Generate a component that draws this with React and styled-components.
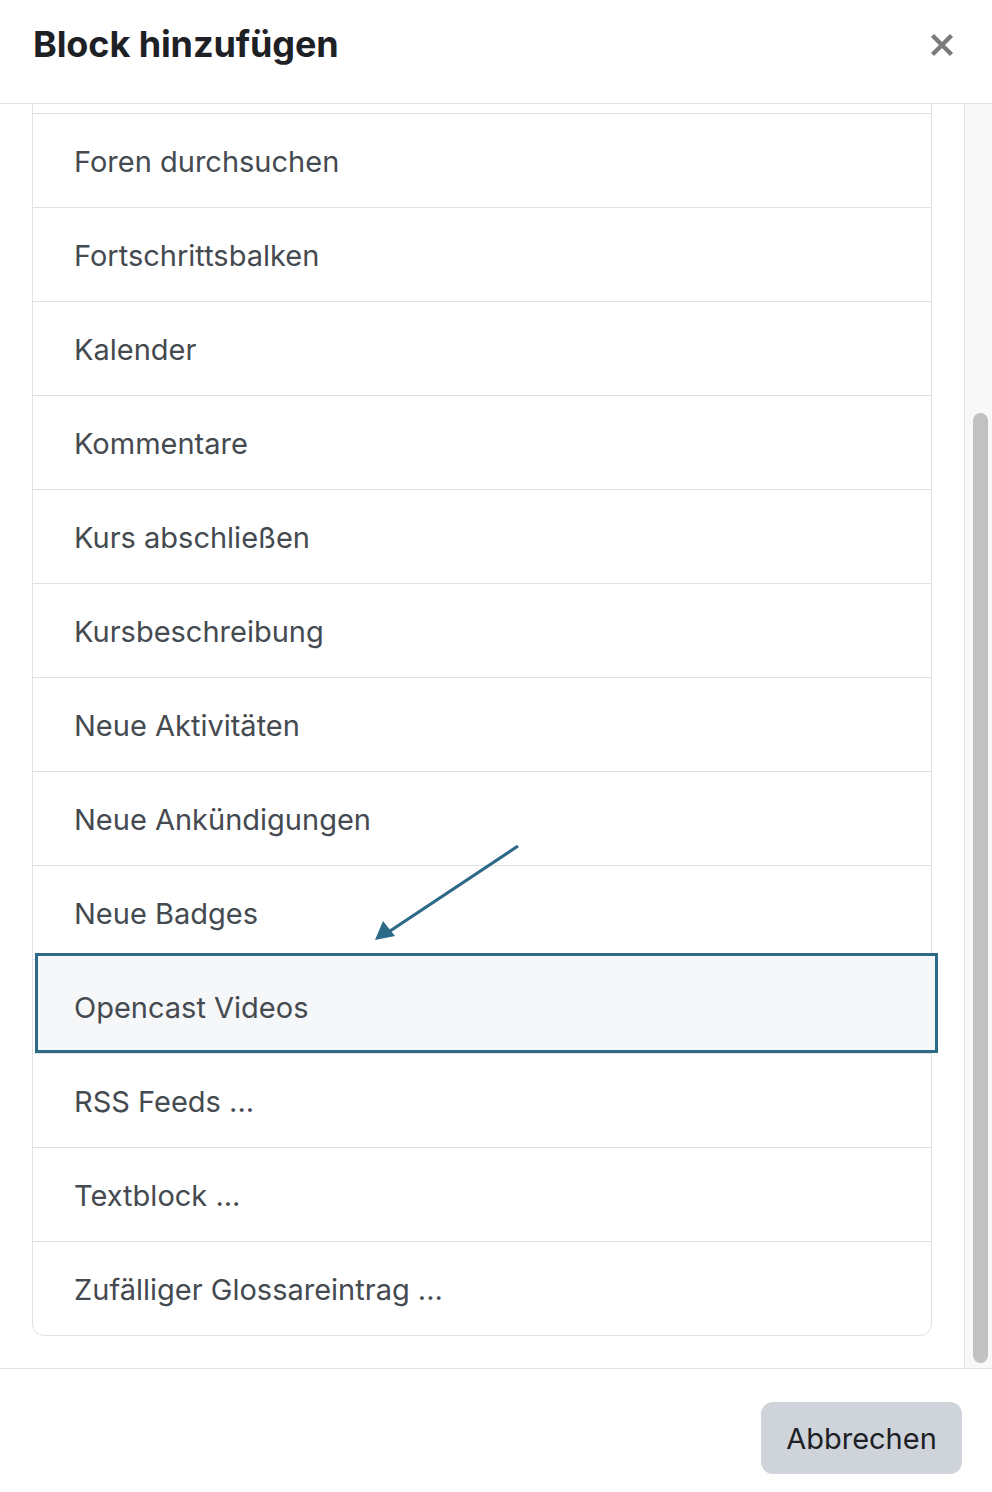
import React, { useEffect, useRef } from "react";
import styled, { createGlobalStyle } from "styled-components";

const GlobalStyle = createGlobalStyle`
  html, body {
    margin: 0;
    padding: 0;
    background: #fff;
  }
  body {
    font-family: Inter, "Liberation Sans", Arial, sans-serif;
    -webkit-font-smoothing: antialiased;
  }
`;

const Modal = styled.div`
  width: 992px;
  height: 1492px;
  display: flex;
  flex-direction: column;
  background: #fff;
  overflow: hidden;
`;

const Header = styled.div`
  height: 103px;
  flex: none;
  display: flex;
  align-items: center;
  justify-content: space-between;
  padding: 0 38px 0 33px;
  border-bottom: 1px solid #dee2e6;
  box-sizing: content-box;
`;

const Title = styled.h5`
  margin: 0 0 16px;
  font-size: 36px;
  font-weight: 700;
  color: #1d2125;
  letter-spacing: -0.1px;
`;

const Close = styled.button`
  border: 0;
  background: none;
  padding: 0;
  margin-top: -14px;
  width: 24px;
  height: 24px;
  display: flex;
  align-items: center;
  justify-content: center;
  cursor: pointer;
`;

const Body = styled.div`
  height: 1264px;
  flex: none;
  display: flex;
`;

const Viewport = styled.div`
  flex: 1;
  overflow: hidden;
  padding: 32px;
  box-sizing: border-box;
`;

const ScrollTrack = styled.div`
  width: 28px;
  flex: none;
  background: #f8f8f8;
  border-left: 1px solid #e6e6e6;
  padding: 309px 4px 5px 8px;
  box-sizing: border-box;
`;

const ScrollThumb = styled.div`
  height: 950px;
  border-radius: 8px;
  background: #c1c1c1;
`;

const List = styled.div`
  width: 900px;
  box-sizing: border-box;
  border: 1px solid #dee2e6;
  border-radius: 12px;
  display: flex;
  flex-direction: column;
`;

const Item = styled.div`
  position: relative;
  display: flex;
  align-items: center;
  padding: 2px 41px 0;
  box-sizing: border-box;
  height: 94px;
  font-size: 29px;
  color: #454a50;
  border-top: ${(p) => (p.$first ? "0" : "1px solid #dee2e6")};
`;

const Label = styled.span`
  position: relative;
  z-index: 2;
`;

const Highlight = styled.div`
  position: absolute;
  left: 2px;
  top: -7px;
  width: 903px;
  height: 100px;
  box-sizing: border-box;
  border: 3px solid #2c6a88;
  background: #f6f7f9;
  z-index: 1;
`;

const Arrow = styled.svg`
  position: absolute;
  left: 306px;
  top: -118px;
  z-index: 3;
  overflow: visible;
`;

const Footer = styled.div`
  flex: 1;
  display: flex;
  justify-content: flex-end;
  align-items: flex-start;
  padding: 33px 30px 0 0;
  border-top: 1px solid #dee2e6;
`;

const CancelButton = styled.button`
  width: 201px;
  height: 72px;
  border: 0;
  border-radius: 12px;
  background: #ced4da;
  color: #1d2125;
  font-family: inherit;
  font-size: 29px;
  cursor: pointer;
`;

const items = [
  "Aktivitäten",
  "Aktuelle Termine",
  "Blog-Menü",
  "Blogschlagwörter",
  "Foren durchsuchen",
  "Fortschrittsbalken",
  "Kalender",
  "Kommentare",
  "Kurs abschließen",
  "Kursbeschreibung",
  "Neue Aktivitäten",
  "Neue Ankündigungen",
  "Neue Badges",
  "Opencast Videos",
  "RSS Feeds ...",
  "Textblock ...",
  "Zufälliger Glossareintrag ...",
];

export default function App() {
  const viewRef = useRef(null);

  useEffect(() => {
    const el = viewRef.current;
    if (el) el.scrollTop = el.scrollHeight;
  }, []);

  return (
    <>
      <GlobalStyle />
      <Modal>
        <Header>
          <Title>Block hinzufügen</Title>
          <Close aria-label="Schließen">
            <svg width="24" height="24" viewBox="0 0 24 24">
              <path d="M2.5 2.5 L21.5 21.5 M21.5 2.5 L2.5 21.5" stroke="#7a7a7a" strokeWidth="4.4" />
            </svg>
          </Close>
        </Header>
        <Body>
          <Viewport ref={viewRef}>
            <List>
              {items.map((name, i) => (
                <Item key={name} $first={i === 0}>
                  {name === "Opencast Videos" && (
                    <>
                      <Highlight />
                      <Arrow width="150" height="100" viewBox="0 0 150 100">
                        <line x1="179" y1="4" x2="48" y2="91" stroke="#2c6a88" strokeWidth="3.2" />
                        <path d="M36 98 L44 79 L56 94 Z" fill="#2c6a88" />
                      </Arrow>
                    </>
                  )}
                  <Label>{name}</Label>
                </Item>
              ))}
            </List>
          </Viewport>
          <ScrollTrack>
            <ScrollThumb />
          </ScrollTrack>
        </Body>
        <Footer>
          <CancelButton>Abbrechen</CancelButton>
        </Footer>
      </Modal>
    </>
  );
}
